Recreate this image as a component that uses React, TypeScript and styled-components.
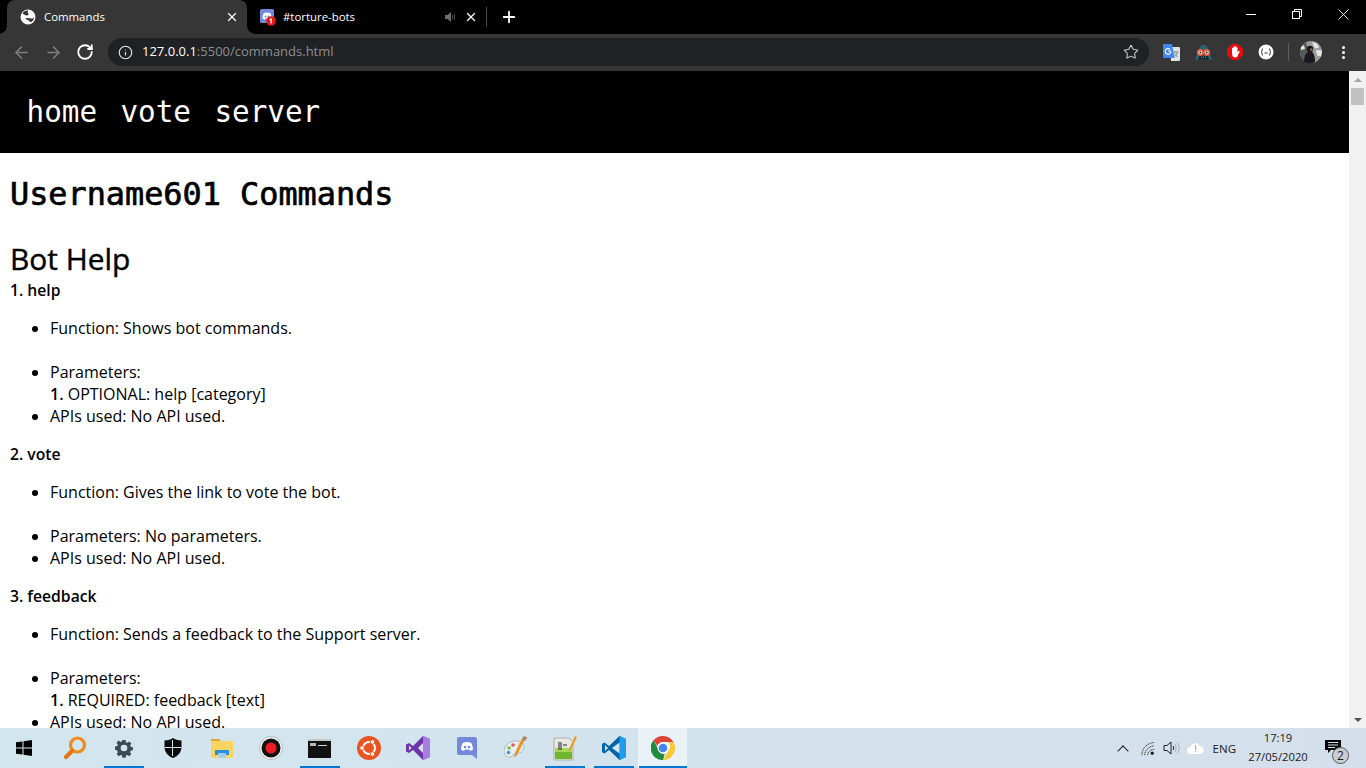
import React from "react";
import styled, { createGlobalStyle } from "styled-components";
import { ArrowLeft, ArrowRight, Info, Plus, RotateCw, Star, X } from "lucide-react";

const GlobalStyle = createGlobalStyle`
    html, body {
        margin: 0;
        padding: 0;
        height: 100%;
        overflow: hidden;
        background: #ffffff;
    }
`;

interface Command {
    name: string;
    func: string;
    params: React.ReactNode;
}

const commands: Command[] = [
    {
        name: "1. help",
        func: "Function: Shows bot commands.",
        params: <>Parameters:<br /><b>1.</b> OPTIONAL: help [category]</>,
    },
    {
        name: "2. vote",
        func: "Function: Gives the link to vote the bot.",
        params: "Parameters: No parameters.",
    },
    {
        name: "3. feedback",
        func: "Function: Sends a feedback to the Support server.",
        params: <>Parameters:<br /><b>1.</b> REQUIRED: feedback [text]</>,
    },
];

const GlobeIcon = () => (
    <svg width="16" height="16" viewBox="0 0 16 16">
        <circle cx="8" cy="8" r="7.5" fill="#fff" />
        <path d="M2.500 4.500C4 5 5 6.500 7 6.500c1.500 0 2-1.500 1-2.500-.5-.6-.5-1.500.5-2.500C6 1 3.500 2.300 2.500 4.500z" fill="#363636" />
        <path d="M5 9.500c2-1 4-.5 6 0 1.500.3 2.500-.3 3.200-1.500-.2 2.500-1.500 4.500-3.700 5.300C9.500 11.500 7 11 5 9.500z" fill="#363636" />
    </svg>
);

const DiscordFavicon = () => (
    <svg width="16" height="17" viewBox="0 0 16 17">
        <rect x="0" y="0" width="14" height="14" rx="1.500" fill="#7289da" />
        <path d="M7 3.500c-2 0-3.500 1-3.500 1S2.500 7 2.500 9.500c1 1 2.300 1 2.300 1l.6-1h3.200l.6 1s1.300 0 2.300-1c0-2.500-1-5-1-5S9 3.500 7 3.500z" fill="#fff" />
        <circle cx="5.500" cy="7.500" r="1" fill="#7289da" />
        <circle cx="8.500" cy="7.500" r="1" fill="#7289da" />
        <circle cx="11" cy="12" r="4.800" fill="#e01a1a" />
        <path d="M10.500 9.500h1.300v5h-1.300v-3.700l-1 .3v-.9z" fill="#fff" />
    </svg>
);

const MutedSpeaker = () => (
    <svg width="12" height="12" viewBox="0 0 12 12">
        <path d="M1 4h2.500L7 1v10L3.500 8H1z" fill="#6f6f6f" />
        <path d="M8.500 4v4M10.500 3v6" stroke="#4a4a4a" strokeWidth="1" />
    </svg>
);

const RestoreIcon = () => (
    <svg width="10" height="10" viewBox="0 0 10 10" fill="none" stroke="#fff" strokeWidth="1">
        <rect x="0.500" y="2.500" width="7" height="7" />
        <path d="M2.500 2.500V0.500H9.500V7.500H7.500" />
    </svg>
);

const TranslateIcon = () => (
    <svg width="17" height="17" viewBox="0 0 17 17">
        <path d="M7 3h9a1 1 0 0 1 1 1v12a1 1 0 0 1-1 1H8z" fill="#dfe2e6" />
        <path d="M10.500 8h5M13 7v1.500M14.500 8.500c-.5 2-1.700 3.200-3.200 4M11.500 9.500c.6 1.300 1.800 2.500 3.200 3" stroke="#79898f" strokeWidth="1" fill="none" />
        <path d="M1 0h8l2.500 14H1a1 1 0 0 1-1-1V1a1 1 0 0 1 1-1z" fill="#4285f4" />
        <path d="M7.800 7.500a2.800 2.800 0 1 1-.8-2" fill="none" stroke="#fff" strokeWidth="1.200" />
        <path d="M5.300 7.200h2.500" stroke="#fff" strokeWidth="1.200" />
    </svg>
);

const SpyIcon = () => (
    <svg width="17" height="17" viewBox="0 0 17 17">
        <path d="M8.500 1C5.500 1 4 3.500 3.500 7L0 15.500h17L13.500 7C13 3.500 11.500 1 8.500 1z" fill="#2d6270" />
        <path d="M4.500 11.500h8l1.500 4H3z" fill="#13262c" />
        <path d="M6.500 12.500v1.500M8.500 12.500v1.500M10.500 12.500v1.500" stroke="#6f8a92" strokeWidth="0.800" />
        <circle cx="5.300" cy="8.500" r="2.800" fill="#f0cdbd" stroke="#e2553d" strokeWidth="1.400" />
        <circle cx="11.700" cy="8.500" r="2.800" fill="#f0cdbd" stroke="#e2553d" strokeWidth="1.400" />
        <circle cx="5.300" cy="8.500" r="0.900" fill="#333" />
        <circle cx="11.700" cy="8.500" r="0.900" fill="#333" />
    </svg>
);

const AdBlockIcon = () => (
    <svg width="16" height="16" viewBox="0 0 16 16">
        <path d="M5 0h6l5 5v6l-5 5H5l-5-5V5z" fill="#e60d0d" />
        <path d="M5 8V4.500a.7.700 0 0 1 1.400 0V3.200a.7.700 0 0 1 1.400 0V2.800a.7.700 0 0 1 1.400 0v.9a.7.700 0 0 1 1.300 0v4.600l.9-1c.7-.7 1.600 0 1.100.8L9.800 13.300H7.200C5.800 13.300 5 11.500 5 8z" fill="#fff" />
    </svg>
);

const JsonIcon = () => (
    <svg width="16" height="16" viewBox="0 0 16 16">
        <circle cx="8" cy="8" r="7.500" fill="#fff" />
        <path d="M5 4.500C3.500 4.500 4.500 7.500 3.300 8c1.200.5.2 3.500 1.700 3.500M11 4.500c1.500 0 .5 3 1.700 3.500-1.200.5-.2 3.500-1.700 3.500" stroke="#333" strokeWidth="1" fill="none" />
        <path d="M6.500 9h3" stroke="#333" strokeWidth="1" />
    </svg>
);

const AvatarIcon = () => (
    <svg width="22" height="22" viewBox="0 0 22 22">
        <circle cx="11" cy="11" r="11" fill="#9a9e9f" />
        <path d="M0 11a11 11 0 0 1 6-9.800L8 9l1 13A11 11 0 0 1 0 11z" fill="#55595b" />
        <path d="M12 1l5 1.500 2 4-4 1zM16 9l6 .5-1 6-4-1zM1 6l3-2 1 4-4 1z" fill="#e4e7e6" />
        <circle cx="10" cy="8" r="3.200" fill="#17141a" />
        <path d="M4 21c0-7 3-10.500 6-10.500s5 3 5 10.500l-3 1H8z" fill="#1b1720" />
        <path d="M10 7l2.500 1v2l-2.500-.5z" fill="#8a6a58" />
    </svg>
);

const WindowsLogo = () => (
    <svg width="16" height="16" viewBox="0 0 16 16">
        <path d="M0 2.300L6.500 1.400V7.500H0zM7.500 1.300L16 0V7.500H7.500zM0 8.500H6.500V14.600L0 13.700zM7.500 8.500H16V16L7.500 14.700z" fill="#000" />
    </svg>
);

const SearchApp = () => (
    <svg width="24" height="24" viewBox="0 0 24 24" fill="none">
        <circle cx="14.500" cy="9" r="7" stroke="#f08a1d" strokeWidth="3.200" />
        <path d="M9 15l-6 6" stroke="#e8760f" strokeWidth="4.200" strokeLinecap="round" />
    </svg>
);

const GearApp = () => (
    <svg width="20" height="20" viewBox="0 0 20 20">
        <path fillRule="evenodd" fill="#3e4a52" d="M8.300 1h3.400l.5 2.500 1.500.6 2.100-1.400 2.400 2.400-1.400 2.100.6 1.500 2.500.5v3.400l-2.500.5-.6 1.500 1.400 2.100-2.400 2.400-2.100-1.400-1.500.6-.5 2.500H8.300l-.5-2.500-1.500-.6-2.100 1.400-2.400-2.400 1.400-2.100-.6-1.500L0 11.700V8.300l2.500-.5.6-1.500-1.400-2.100 2.400-2.400 2.100 1.400 1.500-.6zM10 6.300a3.700 3.700 0 1 0 0 7.400 3.700 3.700 0 0 0 0-7.400z" transform="translate(1 1) scale(.9)" />
    </svg>
);

const ShieldApp = () => (
    <svg width="18" height="20" viewBox="0 0 18 20">
        <path d="M9 0c2 1.500 5 2.500 8.500 2.500V9c0 5-3.500 9-8.500 11C4 18 .5 14 .5 9V2.500C4 2.500 7 1.500 9 0z" fill="#0b0b0b" />
        <path d="M8.500 2v16M.5 9.500h17" stroke="#d3e5ee" strokeWidth="1" />
    </svg>
);

const FolderApp = () => (
    <svg width="22" height="20" viewBox="0 0 22 20">
        <path d="M0 1h8l2 2h-10z" fill="#e0a92e" />
        <path d="M0 3h21a1 1 0 0 1 1 1v15a1 1 0 0 1-1 1H0z" fill="#fcd462" />
        <path d="M4 17V12h14v5h-3.500v-2h-7v2z" fill="#2f8fdc" />
        <path d="M7.500 15h7v5h-7z" fill="#9ad0f5" />
    </svg>
);

const RecordApp = () => (
    <svg width="24" height="24" viewBox="0 0 24 24">
        <circle cx="12" cy="12" r="11.500" fill="#f3f3f3" stroke="#8a8a8a" strokeWidth="0.500" />
        <circle cx="12" cy="12" r="9.500" fill="#111" />
        <circle cx="12" cy="12" r="5.500" fill="#ee1c25" />
    </svg>
);

const CmdApp = () => (
    <svg width="23" height="19" viewBox="0 0 23 19">
        <rect width="23" height="19" fill="#111" />
        <rect width="23" height="2" fill="#c4c8cb" />
        <rect x="2" y="4" width="6" height="3" fill="#b8b8b8" />
        <rect x="10" y="6" width="9" height="1" fill="#d0d0d0" />
    </svg>
);

const UbuntuApp = () => (
    <svg width="24" height="24" viewBox="0 0 24 24">
        <circle cx="12" cy="12" r="12" fill="#e95420" />
        <circle cx="12" cy="12" r="6" fill="none" stroke="#fff" strokeWidth="2" />
        <circle cx="5" cy="12" r="2.300" fill="#fff" stroke="#e95420" />
        <circle cx="15.500" cy="6" r="2.300" fill="#fff" stroke="#e95420" />
        <circle cx="15.500" cy="18" r="2.300" fill="#fff" stroke="#e95420" />
    </svg>
);

const VisualStudioApp = () => (
    <svg width="24" height="24" viewBox="0 0 24 24">
        <path d="M17 0l7 3v18l-7 3-10-10-4 3-3-1.500v-7L3 7l4 3z" fill="#6d33a8" />
        <path d="M17 0l7 3v18l-7 3z" fill="#a87de0" />
        <path d="M17 7l-5 5 5 5zM3 9.500v5l2.500-2.500z" fill="#d3e2ec" />
    </svg>
);

const DiscordApp = () => (
    <svg width="20" height="22" viewBox="0 0 20 22">
        <path d="M2 0h16a2 2 0 0 1 2 2v20l-5-4H2a2 2 0 0 1-2-2V2a2 2 0 0 1 2-2z" fill="#7289da" />
        <path d="M10 5c-2.500 0-4.500 1.200-4.500 1.200S4 9.500 4 12.500c1.200 1.200 3 1.200 3 1.200l.8-1.200h4.400l.8 1.200s1.800 0 3-1.200c0-3-1.500-6.300-1.500-6.300S12.500 5 10 5z" fill="#fff" />
        <circle cx="8" cy="10" r="1.300" fill="#7289da" />
        <circle cx="12" cy="10" r="1.300" fill="#7289da" />
    </svg>
);

const PaintApp = () => (
    <svg width="24" height="24" viewBox="0 0 24 24">
        <path d="M11 5C5 5 0 10 0 15c0 4 3 7 7 6 3-1 1-3 4-3 5 0 9-3 9-7s-4-6-9-6z" fill="#e6eef3" stroke="#8fa6b4" strokeWidth="0.700" />
        <circle cx="5" cy="12" r="1.800" fill="#7bc043" />
        <circle cx="9" cy="9" r="1.800" fill="#e8534a" />
        <circle cx="4.500" cy="16.500" r="1.800" fill="#4a90d9" />
        <path d="M20.500 4L13.500 18l-3 4 .3-5L18 2.500z" fill="#ee8f1a" />
        <path d="M19.500 0l4 1.500-2.500 3.500-3-2z" fill="#a98a5e" />
    </svg>
);

const NotepadApp = () => (
    <svg width="24" height="25" viewBox="0 0 24 25">
        <path d="M1 2h15l4 4v18H1z" fill="#e8e8e0" stroke="#8b8b80" strokeWidth="0.600" />
        <path d="M2 14h17v9H2z" fill="#6fb62f" />
        <path d="M2 12h17v4H2z" fill="#a7d65c" />
        <path d="M6 6v8M8 6v8M10 9h4" stroke="#222" strokeWidth="1" />
        <path d="M22 0l2 1-6 13-2.500 2 .5-3z" fill="#e6a021" />
    </svg>
);

const VsCodeApp = () => (
    <svg width="24" height="24" viewBox="0 0 24 24">
        <path d="M17.500 0L24 3v18l-6.500 3L7 14l-4.500 3.500L0 16v-8l2.500-1.500L7 10z" fill="#0065a9" />
        <path d="M17.500 0L24 3v18l-6.500 3z" fill="#1f9cf0" />
        <path d="M17.500 6.500L10 12l7.500 5.500z" fill="#d3e5ee" />
        <path d="M3 9v6l3-3z" fill="#d3e5ee" />
    </svg>
);

const ChromeApp = () => (
    <svg width="24" height="24" viewBox="0 0 24 24">
        <path d="M12 0a12 12 0 0 1 10.400 6H12a6 6 0 0 0-5.700 4L2.500 4.300A12 12 0 0 1 12 0z" fill="#db4437" />
        <path d="M22.400 6A12 12 0 0 1 12 24l5.200-9a6 6 0 0 0 0-9z" fill="#fcc934" />
        <path d="M12 24A12 12 0 0 1 2.500 4.300L7.700 14a6 6 0 0 0 6 4z" fill="#1e8e3e" />
        <circle cx="12" cy="12" r="5.500" fill="#fff" />
        <circle cx="12" cy="12" r="4.300" fill="#4285f4" />
    </svg>
);

const WifiIcon = () => (
    <svg width="15" height="15" viewBox="0 0 16 16" fill="none" stroke="#333" strokeWidth="1">
        <path d="M1 15C1 8 6 2.500 14 1.500M4 15C4 10 8 6 14 5M7 15c0-3 3-6 7-6" strokeDasharray="1.500 .7" />
        <circle cx="12" cy="13" r="1.800" fill="#222" stroke="none" />
    </svg>
);

const VolumeIcon = () => (
    <svg width="17" height="16" viewBox="0 0 17 16" fill="none" stroke="#222" strokeWidth="1">
        <path d="M1 5.500h3L8 2v12l-4-3.500H1z" />
        <path d="M10 6c.8 1 .8 3 0 4" />
        <path d="M12 4c1.300 2 1.300 6 0 8M14.500 2.500c2 3 2 8 0 11" stroke="#aab" />
    </svg>
);

const CloudAlertIcon = () => (
    <svg width="17" height="11" viewBox="0 0 17 11">
        <path d="M4 11a3.500 3.500 0 0 1-.5-7A5 5 0 0 1 13 3.500 3.800 3.800 0 0 1 13.500 11z" fill="#fff" />
        <path d="M8 2.500h1.200V7H8zM8 8h1.200v1.300H8z" fill="#a8a8a8" />
    </svg>
);

const NotificationIcon = () => (
    <svg width="16" height="14" viewBox="0 0 16 14">
        <path d="M0 0h16v10H6l-3 3v-3H0z" fill="#000" />
        <path d="M3 2.500h10M3 5h10M3 7.500h7" stroke="#d5e0ea" strokeWidth="1" />
    </svg>
);

const taskbarApps: { icon: React.ReactNode; open?: boolean; focused?: boolean }[] = [
    { icon: <SearchApp /> },
    { icon: <GearApp />, open: true },
    { icon: <ShieldApp /> },
    { icon: <FolderApp /> },
    { icon: <RecordApp /> },
    { icon: <CmdApp />, open: true },
    { icon: <UbuntuApp /> },
    { icon: <VisualStudioApp /> },
    { icon: <DiscordApp /> },
    { icon: <PaintApp /> },
    { icon: <NotepadApp />, open: true },
    { icon: <VsCodeApp />, open: true },
    { icon: <ChromeApp />, open: true, focused: true },
];

const App = () => {
    return (
        <>
            <GlobalStyle />
            <Screen>
                <TabStrip>
                    <ActiveTab>
                        <GlobeIcon />
                        <TabTitle>Commands</TabTitle>
                        <X size={14} strokeWidth={2.2} color="#fff" />
                    </ActiveTab>
                    <InactiveTab>
                        <DiscordFavicon />
                        <TabTitle>#torture-bots</TabTitle>
                        <MutedSpeaker />
                        <X size={14} strokeWidth={2.2} color="#fff" />
                    </InactiveTab>
                    <NewTab><Plus size={18} strokeWidth={2.4} color="#fff" /></NewTab>
                    <WindowControls>
                        <WindowButton><MinimizeBar /></WindowButton>
                        <WindowButton><RestoreIcon /></WindowButton>
                        <WindowButton><X size={19} strokeWidth={1.1} color="#fff" /></WindowButton>
                    </WindowControls>
                </TabStrip>

                <Toolbar>
                    <NavButtons>
                        <ArrowLeft size={19} strokeWidth={2} color="#808080" />
                        <ArrowRight size={19} strokeWidth={2} color="#808080" />
                        <RotateCw size={18} strokeWidth={2.4} color="#fff" />
                    </NavButtons>
                    <Omnibox>
                        <Info size={15} strokeWidth={1.8} color="#e8e8e8" />
                        <Url>127.0.0.1<UrlRest>:5500/commands.html</UrlRest></Url>
                        <StarSlot><Star size={16} strokeWidth={1.6} color="#c8c8c8" /></StarSlot>
                    </Omnibox>
                    <Extensions>
                        <TranslateIcon />
                        <SpyIcon />
                        <AdBlockIcon />
                        <JsonIcon />
                        <ToolbarDivider />
                        <AvatarIcon />
                        <MenuDots><i /><i /><i /></MenuDots>
                    </Extensions>
                </Toolbar>

                <Viewport>
                    <Page>
                        <NavBar>
                            <NavLink>home</NavLink>
                            <NavLink>vote</NavLink>
                            <NavLink>server</NavLink>
                        </NavBar>
                        <Content>
                            <Title>Username601 Commands</Title>
                            <Section>Bot Help</Section>
                            {commands.map((command) => (
                                <div key={command.name}>
                                    <CommandName>{command.name}</CommandName>
                                    <CommandList>
                                        <li>{command.func}<br /><br /></li>
                                        <li>{command.params}</li>
                                        <li>APIs used: No API used.</li>
                                    </CommandList>
                                </div>
                            ))}
                        </Content>
                    </Page>
                    <ScrollBar>
                        <ScrollArrow $up />
                        <ScrollThumb />
                        <ScrollSpacer />
                        <ScrollArrow />
                    </ScrollBar>
                </Viewport>

                <Taskbar>
                    <StartButton><WindowsLogo /></StartButton>
                    {taskbarApps.map((app, i) => (
                        <TaskItem key={i} $open={app.open} $focused={app.focused}>{app.icon}</TaskItem>
                    ))}
                    <Tray>
                        <TrayChevron />
                        <TraySlot $left={14}><WifiIcon /></TraySlot>
                        <TraySlot $left={7}><VolumeIcon /></TraySlot>
                        <TraySlot $left={7}><CloudAlertIcon /></TraySlot>
                        <TraySlot $left={9}>ENG</TraySlot>
                        <Clock>
                            <span>17:19</span>
                            <span>27/05/2020</span>
                        </Clock>
                        <Notifications>
                            <NotificationIcon />
                            <NotificationCount>2</NotificationCount>
                        </Notifications>
                    </Tray>
                </Taskbar>
            </Screen>
        </>
    );
};

const Screen = styled.div`
    display: flex;
    flex-direction: column;
    width: 1366px;
    height: 768px;
    overflow: hidden;
`;

const TabStrip = styled.div`
    display: flex;
    align-items: flex-end;
    height: 34px;
    padding-left: 7px;
    background: #000000;
    flex-shrink: 0;
`;

const ActiveTab = styled.div`
    position: relative;
    display: flex;
    align-items: center;
    width: 240px;
    height: 34px;
    padding: 0 8px 0 13px;
    box-sizing: border-box;
    background: #363636;
    border-radius: 8px 8px 0 0;

    &::before, &::after {
        content: "";
        position: absolute;
        bottom: 0;
        width: 8px;
        height: 8px;
    }

    &::before {
        left: -8px;
        background: radial-gradient(circle at 0 0, transparent 7.5px, #363636 8px);
    }

    &::after {
        right: -8px;
        background: radial-gradient(circle at 100% 0, transparent 7.5px, #363636 8px);
    }
`;

const TabTitle = styled.span`
    flex: 1;
    margin: -2px 0 0 8px;
    font: 11.4px "Open Sans", sans-serif;
    color: #ffffff;
    white-space: nowrap;
`;

const InactiveTab = styled.div`
    display: flex;
    align-items: center;
    gap: 8px;
    width: 240px;
    height: 20px;
    margin-bottom: 7px;
    padding: 0 8px 0 13px;
    box-sizing: border-box;
    border-right: 1px solid #4a4a4a;

    ${TabTitle} {
        margin-left: -1px;
    }
`;

const NewTab = styled.div`
    display: flex;
    align-items: center;
    justify-content: center;
    width: 44px;
    height: 34px;
`;

const WindowControls = styled.div`
    display: flex;
    margin-left: auto;
    height: 34px;
`;

const WindowButton = styled.div`
    display: flex;
    align-items: center;
    justify-content: center;
    width: 46px;
    height: 28px;
`;

const MinimizeBar = styled.div`
    width: 10px;
    height: 1px;
    background: #ffffff;
`;

const Toolbar = styled.div`
    display: flex;
    align-items: center;
    height: 37px;
    flex-shrink: 0;
    background: #363636;
    padding-bottom: 1px;
    box-sizing: border-box;
`;

const NavButtons = styled.div`
    display: flex;
    align-items: center;
    gap: 13px;
    width: 108px;
    padding-left: 12px;
    box-sizing: border-box;
`;

const Omnibox = styled.div`
    display: flex;
    align-items: center;
    width: 1041px;
    height: 28px;
    padding: 0 10px;
    box-sizing: border-box;
    background: #202124;
    border-radius: 14px;
`;

const Url = styled.span`
    margin: -2px 0 0 9px;
    font: 13px "Open Sans", sans-serif;
    color: #ffffff;
`;

const UrlRest = styled.span`
    color: #8f8f8f;
`;

const StarSlot = styled.span`
    display: flex;
    margin-left: auto;
`;

const Extensions = styled.div`
    display: flex;
    align-items: center;
    gap: 15px;
    padding-left: 14px;
`;

const ToolbarDivider = styled.div`
    width: 1px;
    height: 18px;
    background: #5e5e5e;
    margin: 0 -4px 0 -1px;
`;

const MenuDots = styled.div`
    display: flex;
    flex-direction: column;
    gap: 2px;
    margin-left: 5px;

    i {
        display: block;
        width: 3px;
        height: 3px;
        border-radius: 50%;
        background: #ffffff;
    }
`;

const Viewport = styled.div`
    display: flex;
    flex: 1;
    min-height: 0;
`;

const Page = styled.div`
    flex: 1;
    min-width: 0;
    overflow: hidden;
    background: #ffffff;
`;

const NavBar = styled.nav`
    display: flex;
    align-items: center;
    gap: 23.4px;
    height: 82px;
    padding-left: 26.5px;
    box-sizing: border-box;
    background: #000000;
`;

const NavLink = styled.a`
    font: 29.3px "DejaVu Sans Mono", monospace;
    color: #ffffff;
`;

const Content = styled.main`
    padding: 0 10px;
    font: 16px "Open Sans", sans-serif;
    color: #000000;
`;

const Title = styled.h1`
    margin: 21px 0 0;
    font: normal 31.85px/40px "DejaVu Sans Mono", monospace;
    -webkit-text-stroke: 0.7px #000000;
`;

const Section = styled.h2`
    margin: 24px 0 0;
    font: 400 29.9px/41px "Open Sans", sans-serif;
    -webkit-text-stroke: 0.4px #000000;
`;

const CommandName = styled.div`
    font-size: 15.7px;
    font-weight: 600;
    line-height: 22px;
`;

const CommandList = styled.ul`
    margin: 16px 0;
    padding-left: 40px;
    line-height: 22px;

    b {
        font-weight: 600;
    }
`;

const ScrollBar = styled.div`
    display: flex;
    flex-direction: column;
    width: 17px;
    background: #f1f1f1;
`;

const ScrollArrow = styled.div<{ $up?: boolean }>`
    display: flex;
    align-items: center;
    justify-content: center;
    height: 17px;

    &::before {
        content: "";
        border-left: 4px solid transparent;
        border-right: 4px solid transparent;
        ${(props) => (props.$up ? "border-bottom: 4px solid #a3a3a3;" : "border-top: 4px solid #505050;")}
    }
`;

const ScrollThumb = styled.div`
    height: 17px;
    margin: 0 2px;
    background: #c1c1c1;
`;

const ScrollSpacer = styled.div`
    flex: 1;
`;

const Taskbar = styled.footer`
    display: flex;
    align-items: stretch;
    height: 40px;
    flex-shrink: 0;
    background: linear-gradient(90deg, #d2e6ee 0%, #d3e3ed 50%, #d5dfec 100%);
`;

const StartButton = styled.div`
    display: flex;
    align-items: center;
    justify-content: center;
    width: 48px;
    margin-right: 2px;
`;

const TaskItem = styled.div<{ $open?: boolean; $focused?: boolean }>`
    position: relative;
    display: flex;
    align-items: center;
    justify-content: center;
    width: 49px;
    background: ${(props) => (props.$focused ? "#eaf2f7" : "transparent")};

    &::after {
        content: "";
        display: ${(props) => (props.$open ? "block" : "none")};
        position: absolute;
        bottom: 0;
        left: ${(props) => (props.$focused ? "1px" : "5px")};
        right: ${(props) => (props.$focused ? "0" : "4px")};
        height: 2px;
        background: #0078d7;
    }
`;

const Tray = styled.div`
    display: flex;
    align-items: center;
    margin-left: auto;
    font: 11.5px "Open Sans", sans-serif;
    color: #1a1a1a;
`;

const TrayChevron = styled.div`
    width: 8px;
    height: 8px;
    margin-top: 5px;
    box-sizing: border-box;
    border-left: 1.5px solid #222;
    border-top: 1.5px solid #222;
    transform: rotate(45deg);
`;

const TraySlot = styled.div<{ $left: number }>`
    display: flex;
    margin-left: ${(props) => props.$left}px;
`;

const Clock = styled.div`
    display: flex;
    flex-direction: column;
    align-items: center;
    margin: -2px 0 0 13px;
    width: 58px;
    font-size: 11.2px;
    line-height: 19px;
    white-space: nowrap;
`;

const Notifications = styled.div`
    position: relative;
    align-self: stretch;
    width: 41px;
    margin-left: 18px;
    padding-top: 12px;
    box-sizing: border-box;
`;

const NotificationCount = styled.span`
    position: absolute;
    left: 7px;
    top: 19px;
    display: flex;
    align-items: center;
    justify-content: center;
    width: 17px;
    height: 17px;
    box-sizing: border-box;
    border-radius: 50%;
    border: 1px solid #555;
    background: #c9ced2;
    font-size: 12px;
`;

export default App;
